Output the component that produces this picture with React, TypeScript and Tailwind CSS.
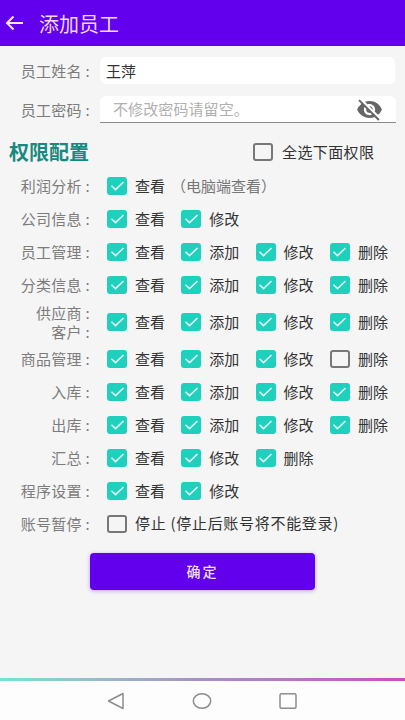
import { MdVisibilityOff } from "react-icons/md";

type Perm = { label: string; on?: boolean };
type Row = { name: string[]; perms: Perm[]; tall?: boolean };

const all: Perm[] = [
  { label: "查看", on: true },
  { label: "添加", on: true },
  { label: "修改", on: true },
  { label: "删除", on: true },
];

const rows: Row[] = [
  { name: ["公司信息 :"], perms: [{ label: "查看", on: true }, { label: "修改", on: true }] },
  { name: ["员工管理 :"], perms: all },
  { name: ["分类信息 :"], perms: all },
  { name: ["供应商 :", "客户 :"], perms: all, tall: true },
  {
    name: ["商品管理 :"],
    perms: [
      { label: "查看", on: true },
      { label: "添加", on: true },
      { label: "修改", on: true },
      { label: "删除" },
    ],
  },
  { name: ["入库 :"], perms: all },
  { name: ["出库 :"], perms: all },
  {
    name: ["汇总 :"],
    perms: [
      { label: "查看", on: true },
      { label: "修改", on: true },
      { label: "删除", on: true },
    ],
  },
  { name: ["程序设置 :"], perms: [{ label: "查看", on: true }, { label: "修改", on: true }] },
];

function Box({ on }: { on?: boolean }) {
  if (!on) {
    return <span className="block h-[18px] w-5 shrink-0 rounded-[3px] border-2 border-[#777777]" />;
  }
  return (
    <span className="flex h-[18px] w-5 shrink-0 items-center justify-center rounded-[3px] bg-[#1fd1bd]">
      <svg width="15" height="12" viewBox="0 0 15 12" fill="none">
        <path d="M1.5 5.8l4 3.8L13.5 2" stroke="#e8fbf8" strokeWidth="1.5" />
      </svg>
    </span>
  );
}

function Label({ lines }: { lines: string[] }) {
  return (
    <div className="w-[90px] shrink-0 text-right text-[15px] leading-[19px] tracking-[0.3px] text-[#7c7c7c]">
      {lines.map((l) => (
        <div key={l}>{l}</div>
      ))}
    </div>
  );
}

function PermRow({ row }: { row: Row }) {
  return (
    <div className={`flex items-center ${row.tall ? "h-[41px]" : "h-[33px]"}`}>
      <Label lines={row.name} />
      <div className="ml-[17px] flex">
        {row.perms.map((p) => (
          <div key={p.label} className="flex w-[74.3px] items-center">
            <Box on={p.on} />
            <span className="ml-2 pt-px text-[15px] text-[#333333]">{p.label}</span>
          </div>
        ))}
      </div>
    </div>
  );
}

export default function App() {
  return (
    <div
      className="flex h-[720px] w-[405px] flex-col overflow-hidden bg-[#f5f5f5]"
      style={{ fontFamily: '"Noto Sans CJK SC", "Noto Sans", sans-serif' }}
    >
      {/* Title bar */}
      <header className="flex h-[46px] shrink-0 items-center bg-[#6200ee] pl-[5px]">
        <svg width="18" height="16" viewBox="0 0 18 16" fill="none">
          <path d="M18 8H2M8.5 1.5L2 8l6.5 6.5" stroke="#f3e6fd" strokeWidth="2" />
        </svg>
        <h1 className="ml-[16px] pt-[2px] text-[20px] leading-none text-[#eed9fb]">添加员工</h1>
      </header>

      {/* Account fields */}
      <div className="mt-[11px] flex items-center">
        <Label lines={["员工姓名 :"]} />
        <div className="ml-[10px] flex h-[27px] w-[295px] items-center rounded-md bg-white pl-[6px] pt-[2px] text-[15px] text-[#333333]">
          王萍
        </div>
      </div>
      <div className="mt-3 flex items-center">
        <Label lines={["员工密码 :"]} />
        <div className="ml-[10px] flex h-[27px] w-[296px] items-center justify-between rounded-t-md border-b border-[#8a8a8a] bg-white pl-[13px] pr-[13px] text-[15px] text-[#b0b0b0]">
          <span className="tracking-[0.1px]">不修改密码请留空。</span>
          <MdVisibilityOff size={27} color="#666666" />
        </div>
      </div>

      {/* Permissions */}
      <div className="mt-[14px] flex h-[30px] items-center pl-[9px]">
        <h2 className="text-[20px] font-bold text-[#17897f]">权限配置</h2>
        <div className="ml-[164px] flex items-center">
          <Box />
          <span className="ml-[9px] text-[15px] tracking-[0.4px] text-[#333333]">全选下面权限</span>
        </div>
      </div>

      <div className="mt-[2px] flex h-[33px] items-center">
        <Label lines={["利润分析 :"]} />
        <div className="ml-[17px] flex items-center">
          <Box on />
          <span className="ml-2 pt-px text-[15px] text-[#333333]">查看</span>
          <span className="ml-[6px] pt-px text-[15px] text-[#777777]">（电脑端查看）</span>
        </div>
      </div>

      {rows.map((r) => (
        <PermRow key={r.name[0]} row={r} />
      ))}

      <div className="flex h-[33px] items-center">
        <Label lines={["账号暂停 :"]} />
        <div className="ml-[17px] flex items-center">
          <Box />
          <span className="ml-2 text-[15px] tracking-[0.7px] text-[#333333]">停止 (停止后账号将不能登录)</span>
        </div>
      </div>

      <button className="ml-[90px] mt-[13px] flex h-[37px] w-[225px] items-center justify-center rounded-[4px] bg-[#6200ee] text-[14px] font-medium tracking-[2px] text-[#f0e0fc] shadow-[0_1px_4px_rgba(98,0,238,0.35)]">
        确定
      </button>

      {/* System navigation */}
      <div className="mt-auto h-[3px] shrink-0 bg-gradient-to-r from-[#76e3d3] via-[#a68fc4] to-[#c64fc0]" />
      <nav className="relative flex h-[39px] shrink-0 items-center bg-[#fdfdfd]">
        <div className="ml-[107px] flex items-center gap-[67px]">
          <svg width="18" height="18" viewBox="0 0 18 18" fill="none">
            <path d="M16 1.5v15L1.5 9z" stroke="#8c8c8c" strokeWidth="1.5" strokeLinejoin="round" />
          </svg>
          <svg width="20" height="18" viewBox="0 0 20 18" fill="none">
            <ellipse cx="10" cy="9" rx="8.7" ry="7.2" stroke="#8c8c8c" strokeWidth="1.5" />
          </svg>
          <svg width="18" height="18" viewBox="0 0 18 18" fill="none">
            <rect x="1" y="1.8" width="16" height="14.4" rx="1.5" stroke="#8c8c8c" strokeWidth="1.5" />
          </svg>
        </div>
      </nav>
    </div>
  );
}
